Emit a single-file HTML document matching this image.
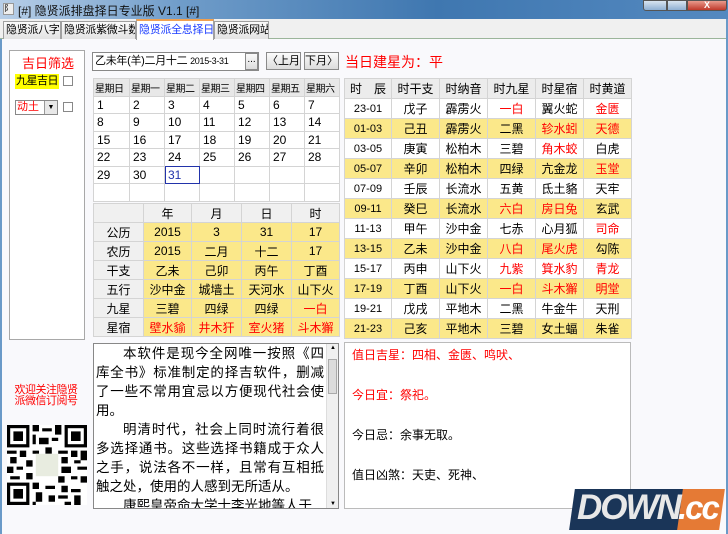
<!DOCTYPE html>
<html><head><meta charset="utf-8"><style>
*{margin:0;padding:0;box-sizing:border-box}
body{width:728px;height:534px;overflow:hidden;background:#f9f9fc;font-family:"Liberation Sans","Noto Sans CJK SC",sans-serif;font-size:12px;color:#000;position:relative}
.a{position:absolute}
.title{left:0;top:0;width:728px;height:19px;background:linear-gradient(90deg,#b8cfe8 0%,#6f9cc9 25%,#3f77b0 60%,#5489c0 100%);}
.strip{left:0;top:19px;width:728px;height:20px;background:#f0f0f0;border-bottom:1px solid #9bb59a}
.tab{top:21px;height:18px;border:1px solid #a0a0a0;border-bottom:none;background:linear-gradient(#fafafa,#e3e3e3);font-size:11px;line-height:16px;padding-left:2px;white-space:nowrap;overflow:hidden;letter-spacing:-0.3px}
.tab.on{top:19px;height:21px;background:#fff;color:#1a3cff;border-top:2px solid #f0a050;line-height:18px}
table{border-collapse:collapse;table-layout:fixed}
td{border:1px solid #d4d4d4;padding:0;white-space:nowrap;overflow:hidden}
.cal td{height:17.5px;padding-left:3px;background:#fff;font-size:12px}
.cal tr:first-child td{background:#e8e8e8;font-size:10px;padding-left:1px;letter-spacing:-0.5px}
.bt td{height:19px;text-align:center;background:#fbe88a;font-size:12px}
.bt td:first-child,.bt tr:first-child td{background:#f0f0f0}
.rt td{height:20px;text-align:center;font-size:12px;background:#fff}
.rt tr.y td{background:#fbe88a}
.rt tr:first-child td{background:#ececec}
.rt td:first-child{font-size:11px}
.r{color:#f00}
.btn{border:1px solid #8a8a8a;background:linear-gradient(#fbfbfb,#dcdcdc);text-align:center;line-height:16px;height:18px;white-space:nowrap;font-size:11px;overflow:hidden}
</style></head><body>
<div class="a title"></div>
<div class="a" style="left:3px;top:3px;width:11px;height:12px;background:#eee;border:1px solid #999;font-size:8px;line-height:10px">阝</div>
<div class="a" style="left:18px;top:2px;font-size:12px;color:#111">[#] 隐贤派排盘择日专业版 V1.1 [#]</div>
<div class="a" style="left:643px;top:0;width:24px;height:11px;border:1px solid #555;border-radius:0 0 0 3px;background:linear-gradient(#d8e4f0,#8fb0d3)"></div>
<div class="a" style="left:667px;top:0;width:20px;height:11px;border:1px solid #555;background:linear-gradient(#d8e4f0,#8fb0d3)"></div>
<div class="a" style="left:687px;top:0;width:40px;height:11px;border:1px solid #555;border-radius:0 0 3px 0;background:linear-gradient(#e99a8c,#c0392b);color:#fff;font-size:9px;text-align:center;line-height:9px;font-weight:bold">X</div>
<div class="a strip"></div>
<div class="a tab" style="left:3px;width:58px">隐贤派八字</div>
<div class="a tab" style="left:61px;width:75px">隐贤派紫微斗数</div>
<div class="a tab on" style="left:136px;width:78px">隐贤派全息择日</div>
<div class="a tab" style="left:214px;width:55px">隐贤派网站</div>
<div class="a" style="left:0;top:39px;width:2px;height:495px;background:#6a9ac8"></div>
<div class="a" style="left:726px;top:19px;width:2px;height:515px;background:#6a9ac8"></div>

<div class="a" style="left:9px;top:50px;width:76px;height:290px;border:1px solid #a8a8a8;background:#fff"></div>
<div class="a r" style="left:22px;top:53px;font-size:13px">吉日筛选</div>
<div class="a" style="left:15px;top:74px;background:#ffff00;font-size:11px;line-height:15px;padding:0 1px;letter-spacing:-0.5px">九星吉日</div>
<div class="a" style="left:63px;top:76px;width:10px;height:10px;border:1px solid #888;background:#fff"></div>
<div class="a" style="left:15px;top:100px;width:43px;height:15px;border:1px solid #888;background:#fff;color:#f00;font-size:11px;line-height:13px;padding-left:1px">动土<span style="position:absolute;right:0;top:0;width:13px;height:13px;background:#e8e8e8;border-left:1px solid #999;color:#000;font-size:7px;text-align:center">▼</span></div>
<div class="a" style="left:63px;top:102px;width:10px;height:10px;border:1px solid #888;background:#fff"></div>

<div class="a r" style="left:10px;top:385px;font-size:11px;line-height:11px;width:72px;text-align:center;letter-spacing:-0.5px">欢迎关注隐贤<br>派微信订阅号</div>
<svg class="a" style="left:7px;top:425px" width="80" height="80" viewBox="0 0 25 25">
<rect width="25" height="25" fill="#fff"/>
<g fill="#000">
<rect x="0" y="0" width="7" height="7"/><rect x="18" y="0" width="7" height="7"/><rect x="0" y="18" width="7" height="7"/>
</g><g fill="#fff"><rect x="1" y="1" width="5" height="5"/><rect x="19" y="1" width="5" height="5"/><rect x="1" y="19" width="5" height="5"/></g>
<g fill="#000"><rect x="2" y="2" width="3" height="3"/><rect x="20" y="2" width="3" height="3"/><rect x="2" y="20" width="3" height="3"/>
<path d="M8 0h2v2h-2zM11 1h3v1h-3zM15 0h2v3h-2zM8 3h1v3h-1zM10 4h3v2h-3zM14 4h2v1h-2zM0 8h3v1h-3zM4 8h2v2h-2zM8 8h2v1h-2zM12 7h2v2h-2zM16 8h3v1h-3zM20 8h2v2h-2zM23 8h2v3h-2zM1 10h2v2h-2zM6 11h2v2h-2zM17 10h2v2h-2zM21 11h2v1h-2zM0 13h2v2h-2zM3 13h2v1h-2zM17 13h3v2h-3zM22 13h3v1h-3zM1 16h3v1h-3zM6 15h2v2h-2zM16 16h2v2h-2zM20 16h2v1h-2zM23 16h2v2h-2zM8 18h2v2h-2zM12 19h3v1h-3zM17 19h2v2h-2zM20 20h3v1h-3zM9 21h2v3h-2zM13 22h2v2h-2zM16 22h3v1h-3zM21 22h2v3h-2zM8 24h1v1h-1zM18 24h2v1h-2z"/></g>
<rect x="9" y="9" width="7" height="7" fill="#e8ece0"/>
</svg>

<div class="a" style="left:92px;top:52px;width:167px;height:19px;border:1px solid #888;background:#fff;font-size:11px;line-height:17px;padding-left:2px;white-space:nowrap;overflow:hidden;letter-spacing:-0.3px">乙未年(羊)二月十二 <span style="font-size:9px">2015-3-31</span></div>
<div class="a btn" style="left:245px;top:53px;width:13px;height:17px;font-size:10px;line-height:12px">...</div>
<div class="a btn" style="left:266px;top:52px;width:35px">〈上月</div>
<div class="a btn" style="left:304px;top:52px;width:35px">下月〉</div>
<div class="a r" style="left:345px;top:52px;font-size:14px">当日建星为：平</div>

<table class="a cal" style="left:93px;top:78px;width:246px;border:1px solid #999">
<colgroup><col style="width:36px"><col style="width:35px"><col style="width:35px"><col style="width:35px"><col style="width:35px"><col style="width:35px"><col style="width:35px"></colgroup>
<tr><td>星期日</td><td>星期一</td><td>星期二</td><td>星期三</td><td>星期四</td><td>星期五</td><td>星期六</td></tr>
<tr><td>1</td><td>2</td><td>3</td><td>4</td><td>5</td><td>6</td><td>7</td></tr>
<tr><td>8</td><td>9</td><td>10</td><td>11</td><td>12</td><td>13</td><td>14</td></tr>
<tr><td>15</td><td>16</td><td>17</td><td>18</td><td>19</td><td>20</td><td>21</td></tr>
<tr><td>22</td><td>23</td><td>24</td><td>25</td><td>26</td><td>27</td><td>28</td></tr>
<tr><td>29</td><td>30</td><td style="outline:1px solid #2233aa;outline-offset:-1px;color:#2233aa">31</td><td></td><td></td><td></td><td></td></tr>
<tr><td></td><td></td><td></td><td></td><td></td><td></td><td></td></tr>
</table>

<table class="a bt" style="left:93px;top:203px;width:246px">
<colgroup><col style="width:50px"><col style="width:48px"><col style="width:50px"><col style="width:50px"><col style="width:48px"></colgroup>
<tr><td></td><td>年</td><td>月</td><td>日</td><td>时</td></tr>
<tr><td>公历</td><td>2015</td><td>3</td><td>31</td><td>17</td></tr>
<tr><td>农历</td><td>2015</td><td>二月</td><td>十二</td><td>17</td></tr>
<tr><td>干支</td><td>乙未</td><td>己卯</td><td>丙午</td><td>丁酉</td></tr>
<tr><td>五行</td><td>沙中金</td><td>城墙土</td><td>天河水</td><td>山下火</td></tr>
<tr><td>九星</td><td>三碧</td><td>四绿</td><td>四绿</td><td class="r">一白</td></tr>
<tr><td>星宿</td><td class="r">壁水貐</td><td class="r">井木犴</td><td class="r">室火猪</td><td class="r">斗木獬</td></tr>
</table>

<table class="a rt" style="left:344px;top:78px;width:287px;border:1px solid #ccc">
<colgroup><col style="width:47px"><col style="width:48px"><col style="width:48px"><col style="width:48px"><col style="width:48px"><col style="width:48px"></colgroup>
<tr><td style="font-size:12px">时　辰</td><td>时干支</td><td>时纳音</td><td>时九星</td><td>时星宿</td><td>时黄道</td></tr>
<tr><td>23-01</td><td>戊子</td><td>霹雳火</td><td class="r">一白</td><td>翼火蛇</td><td class="r">金匮</td></tr>
<tr class="y"><td>01-03</td><td>己丑</td><td>霹雳火</td><td>二黑</td><td class="r">轸水蚓</td><td class="r">天德</td></tr>
<tr><td>03-05</td><td>庚寅</td><td>松柏木</td><td>三碧</td><td class="r">角木蛟</td><td>白虎</td></tr>
<tr class="y"><td>05-07</td><td>辛卯</td><td>松柏木</td><td>四绿</td><td>亢金龙</td><td class="r">玉堂</td></tr>
<tr><td>07-09</td><td>壬辰</td><td>长流水</td><td>五黄</td><td>氐土貉</td><td>天牢</td></tr>
<tr class="y"><td>09-11</td><td>癸巳</td><td>长流水</td><td class="r">六白</td><td class="r">房日兔</td><td>玄武</td></tr>
<tr><td>11-13</td><td>甲午</td><td>沙中金</td><td>七赤</td><td>心月狐</td><td class="r">司命</td></tr>
<tr class="y"><td>13-15</td><td>乙未</td><td>沙中金</td><td class="r">八白</td><td class="r">尾火虎</td><td>勾陈</td></tr>
<tr><td>15-17</td><td>丙申</td><td>山下火</td><td class="r">九紫</td><td class="r">箕水豹</td><td class="r">青龙</td></tr>
<tr class="y"><td>17-19</td><td>丁酉</td><td>山下火</td><td class="r">一白</td><td class="r">斗木獬</td><td class="r">明堂</td></tr>
<tr><td>19-21</td><td>戊戌</td><td>平地木</td><td>二黑</td><td>牛金牛</td><td>天刑</td></tr>
<tr class="y"><td>21-23</td><td>己亥</td><td>平地木</td><td>三碧</td><td>女土蝠</td><td>朱雀</td></tr>
</table>

<div class="a" style="left:93px;top:343px;width:246px;height:166px;border:1px solid #888;background:#fff;overflow:hidden">
<div style="position:absolute;left:2px;top:0;width:228px;font-size:13.5px;line-height:19px;text-indent:2em;text-align:justify">
<p>本软件是现今全网唯一按照《四库全书》标准制定的择吉软件，删减了一些不常用宜忌以方便现代社会使用。</p>
<p>明清时代，社会上同时流行着很多选择通书。这些选择书籍成于众人之手，说法各不一样，且常有互相抵触之处，使用的人感到无所适从。</p>
<p>康熙皇帝命大学士李光地等人于</p></div>
<div style="position:absolute;right:0;top:0;width:12px;height:164px;background:#f0f0f0;border-left:1px solid #ddd"><div style="position:absolute;left:1px;top:15px;width:9px;height:35px;background:#dcdcdc;border:1px solid #aaa"></div><div style="position:absolute;top:1px;left:3px;font-size:6px">▲</div><div style="position:absolute;bottom:1px;left:3px;font-size:6px">▼</div></div>
</div>

<div class="a" style="left:344px;top:342px;width:287px;height:167px;border:1px solid #bbb;background:#fff;font-size:12px">
<div class="a r" style="left:7px;top:3px">值日吉星：四相、金匮、鸣吠、</div>
<div class="a r" style="left:7px;top:43px">今日宜：祭祀。</div>
<div class="a" style="left:7px;top:83px">今日忌：余事无取。</div>
<div class="a" style="left:7px;top:123px">值日凶煞：天吏、死神、</div>
</div>

<div class="a" style="left:572px;top:489px;width:110px;height:41px;background:#1a3558;transform:skewX(-8deg)"></div>
<div class="a" style="left:680px;top:489px;width:42px;height:41px;background:#e57a35;transform:skewX(-8deg)"></div>
<div class="a" style="left:577px;top:489px;font-size:35px;line-height:38px;font-weight:bold;font-style:italic;color:#e8e8e8;letter-spacing:-2px;font-family:'Liberation Sans',sans-serif;white-space:nowrap">DOWN</div>
<div class="a" style="left:678px;top:489px;font-size:33px;line-height:38px;font-weight:bold;font-style:italic;color:#fff;letter-spacing:-2px;font-family:'Liberation Sans',sans-serif;white-space:nowrap">.cc</div>
</body></html>
